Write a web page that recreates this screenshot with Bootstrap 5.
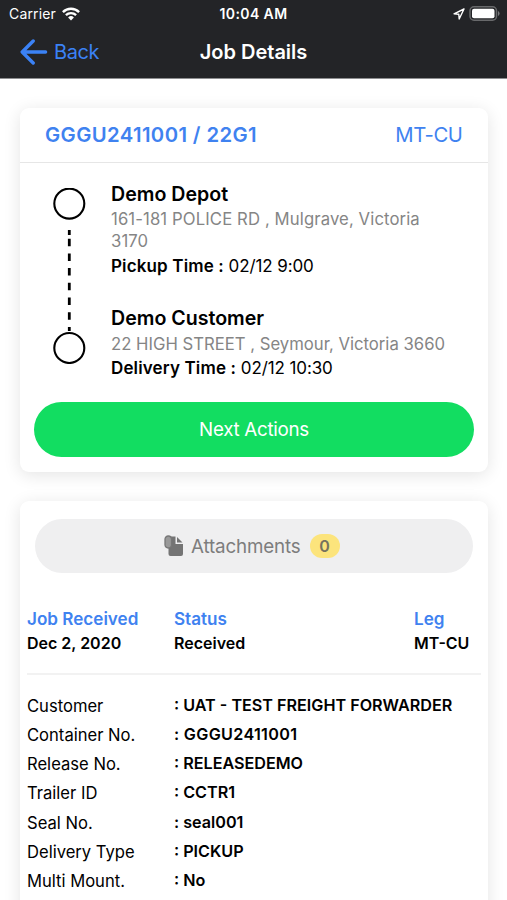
<!DOCTYPE html>
<html lang="en">
<head>
<meta charset="utf-8">
<meta name="viewport" content="width=device-width, initial-scale=1">
<title>Job Details</title>
<link href="https://cdn.jsdelivr.net/npm/bootstrap@5.3.0/dist/css/bootstrap.min.css" rel="stylesheet">
<style>
body{font-family:Inter,"Liberation Sans",sans-serif;color:#000;background:#fff;height:900px;overflow:hidden;font-size:16.7px;line-height:24px}
svg{display:block;flex:none}
.app-head{background:#232427;height:79px;border-bottom:1px solid #8d8e90}
.status-bar{height:27px;font-size:14px;line-height:27px;padding:0 7px 0 9px}
.carrier{letter-spacing:.15px}
.clock{letter-spacing:.4px}
.wifi{margin-left:-2px}
.title-bar{height:50px;padding-left:20px;font-size:20px}
.back{color:#3b82f6;font-size:20px}
.back-label{letter-spacing:-.4px;margin-left:6px}
.blue{color:#3f82f0}
.job-card{margin:29px 19.5px 0 20px;border:0;border-radius:9px;box-shadow:0 3px 17px rgba(0,0,0,.11)}
.job-top{height:55px;padding:0 25px;border-bottom:1px solid #e6e6e6;font-size:20.3px}
.job-code{letter-spacing:.38px}
.leg-code{letter-spacing:-.4px}
.route{padding-left:33px;height:239px}
.track{width:32px;padding-top:25px}
.stops{padding:19px 15px 0 26px}
.stop + .stop{margin-top:28px}
.stop-name{font-size:19.6px;line-height:25px;font-weight:600}
.addr{color:#858585;line-height:22px;margin-bottom:1.5px;padding-top:1px}
.addr-wide{letter-spacing:.11px}
.stop + .stop .addr{padding-top:2px}
.when{font-size:17px;letter-spacing:-.1px}
.when b{letter-spacing:.14px}
.pill{height:54.5px;border-radius:28px;font-size:18.8px;letter-spacing:-.15px;border:0}
.go{background:#12dd61;color:#fff;margin:0 13.5px 15.5px 14px;padding-top:8px;letter-spacing:-.3px}
.att{background:#efeff0;color:#7d7d7d;margin:17.5px 15px 0;padding-right:16px}
.att-label{margin-left:7px;padding-top:2px}
.count{background:#fce47c;color:#77735e;width:30px;height:24px;font-size:16px;font-weight:600;border-radius:12px;margin-left:9px}
.detail-card{height:440px}
.summary{margin:34px 7px 0;height:68px;border-bottom:2px solid #f2f2f2;font-weight:600;font-size:16px}
.summary .blue{font-size:17.1px}
.facts{padding:15.5px 7px 0}
.c1,.fact dt{width:147px}
.c2{width:240px}
.fact{height:29.3px;line-height:29.3px}
.fact dt{font-weight:400;font-size:16.6px;padding-top:1px}
.fact dd{margin:0;font-weight:600;font-size:16.15px}
.digits{letter-spacing:.32px}
</style>
<script src="https://cdn.jsdelivr.net/npm/bootstrap@5.3.0/dist/js/bootstrap.bundle.min.js"></script>
</head>
<body>
<header class="app-head text-white">
  <div class="status-bar d-flex justify-content-between align-items-center position-relative">
    <div class="d-flex align-items-center gap-2"><span class="carrier">Carrier</span>
      <svg class="wifi" width="18" height="14" viewBox="0 0 18 14" fill="none" stroke="#fff" stroke-width="2.4"><path d="M.9 5.1a11.6 11.6 0 0 1 16.2 0M3.9 8.2a7.4 7.4 0 0 1 10.2 0"/><path d="M9 13.4 6.1 10.4a4.3 4.3 0 0 1 5.8 0z" fill="#fff" stroke="none"/></svg></div>
    <span class="clock position-absolute start-50 translate-middle-x fw-semibold">10:04 AM</span>
    <div class="d-flex align-items-center">
      <svg width="12" height="12" viewBox="0 0 12 12" fill="none" stroke="#fff" stroke-width="1.4" stroke-linejoin="round"><path d="M11 1 1 5.8l4.800.4.4 4.8z"/></svg>
      <svg class="ms-1" width="31" height="15" viewBox="0 0 31 15"><rect x="1" y=".8" width="26.5" height="13.4" rx="4" fill="none" stroke="#68696b" stroke-width="1.5"/><rect x="3" y="2.8" width="22.5" height="9.4" rx="2" fill="#fff"/><path d="M29 5v5q1.6-.8 1.6-2.5T29 5z" fill="#77787a"/></svg>
    </div>
  </div>
  <div class="title-bar d-flex align-items-center position-relative">
    <div class="back d-flex align-items-center"><svg width="28" height="26" viewBox="0 0 28 26" fill="none" stroke="#3b82f6" stroke-width="3.4" stroke-linecap="round" stroke-linejoin="round"><path d="M13.2 2 2.2 13l11 11M2.4 13h23.2"/></svg><span class="back-label">Back</span></div>
    <span class="position-absolute start-50 translate-middle-x fw-semibold">Job Details</span>
  </div>
</header>
<main>
  <section class="card job-card">
    <div class="job-top blue d-flex justify-content-between align-items-center"><span class="job-code fw-semibold">GGGU2411001 / 22G1</span><span class="leg-code">MT-CU</span></div>
    <div class="route d-flex">
      <div class="track"><svg width="33" height="176" viewBox="0 0 33 176" fill="none" stroke="#000"><circle cx="16.3" cy="15.6" r="15" stroke-width="2.1"/><circle cx="16.3" cy="160" r="15" stroke-width="2.1"/><path d="M16.3 42v5m0 3.7v7.500m0 7.200v7.500m0 7.200v7.500m0 7.200v7.500m0 7.200v7.500m0 7.200v7.500m0 7.200v4" stroke-width="2.8"/></svg></div>
      <div class="stops flex-grow-1">
        <div class="stop"><div class="stop-name">Demo Depot</div><div class="addr addr-wide">161-181 POLICE RD , Mulgrave, Victoria<br>3170</div><div class="when"><b class="fw-semibold">Pickup Time :</b> 02/12 9:00</div></div>
        <div class="stop"><div class="stop-name">Demo Customer</div><div class="addr">22 HIGH STREET , Seymour, Victoria 3660</div><div class="when"><b class="fw-semibold">Delivery Time :</b> 02/12 10:30</div></div>
      </div>
    </div>
    <button class="btn pill go">Next Actions</button>
  </section>
  <section class="card job-card detail-card">
    <button class="btn pill att d-flex align-items-center justify-content-center"><svg width="20" height="22" viewBox="0 0 20 22"><path d="M6 1.5h5.500V9H19v10a2 2 0 0 1-2 2H6.500a2 2 0 0 1-2-2V5z" fill="#747474"/><path d="M13 2v5.500h5.500z" fill="#747474"/><rect x="1" y="1" width="6.500" height="12" rx="3.200" fill="#999" stroke="#777" stroke-width="1.300"/></svg><span class="att-label">Attachments</span><span class="count d-flex align-items-center justify-content-center">0</span></button>
    <div class="summary d-flex"><div class="c1"><div class="blue">Job Received</div>Dec 2, 2020</div><div class="c2"><div class="blue">Status</div>Received</div><div><div class="blue">Leg</div>MT-CU</div></div>
    <dl class="facts">
      <div class="fact d-flex"><dt>Customer</dt><dd>: UAT - TEST FREIGHT FORWARDER</dd></div>
      <div class="fact d-flex"><dt>Container No.</dt><dd class="digits">: GGGU2411001</dd></div>
      <div class="fact d-flex"><dt>Release No.</dt><dd>: RELEASEDEMO</dd></div>
      <div class="fact d-flex"><dt>Trailer ID</dt><dd>: CCTR1</dd></div>
      <div class="fact d-flex"><dt>Seal No.</dt><dd>: seal001</dd></div>
      <div class="fact d-flex"><dt>Delivery Type</dt><dd>: PICKUP</dd></div>
      <div class="fact d-flex"><dt>Multi Mount.</dt><dd>: No</dd></div>
    </dl>
  </section>
</main>
</body>
</html>
